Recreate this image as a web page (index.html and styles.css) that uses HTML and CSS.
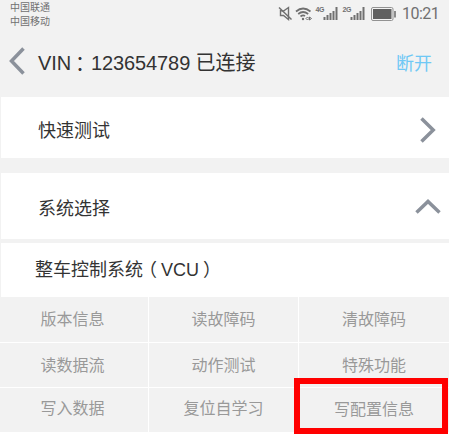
FILE: index.html
```html
<!DOCTYPE html>
<html lang="zh-CN">
<head>
<meta charset="utf-8">
<title>VCU</title>
<link rel="stylesheet" href="styles.css">
</head>
<body>
<div class="status">
  <div class="carriers"><div>中国联通</div><div>中国移动</div></div>
  <svg class="icons" width="124" height="20" viewBox="0 0 124 20" fill="none" stroke="#707070">
    <path d="M2.500 7.500v5h3l5 4v-12l-5 3.500z" stroke-width="1.400"/>
    <path d="M1 4.500l12.500 12" stroke-width="1.500"/>
    <path d="M18 8.500q7-6 14.500 0M20.200 11q4.800-4 10 0M22.500 13.500q2.500-2 4.500-.5" stroke-width="1.700"/>
    <circle cx="25" cy="16" r="1.200" fill="#707070" stroke="none"/>
    <path d="M28 15.500l1.500-1.500 1.500 1.500-1.500 1.500zM31.500 14v3l2-1.500z" stroke-width="1"/>
    <path d="M46.500 17v-3M49.500 17v-5M52.500 17v-7M55.500 17v-9M58.500 17v-13M73.500 17v-3M76.500 17v-5M79.500 17v-7M82.500 17v-9M85.500 17v-13" stroke-width="2"/>
    <rect x="93.500" y="4.500" width="21.500" height="13" rx="1.500" stroke="#929292"/>
    <path fill="#606060" stroke="none" d="M95 6h18.500v10H95z"/>
    <path d="M117 8v6.500" stroke-width="1.600"/>
    <g class="network"><text x="37.500" y="9">4G</text><text x="64.500" y="9">2G</text></g>
  </svg>
  <div class="clock">10:21</div>
</div>
<header class="title-bar">
  <svg class="back" width="16" height="28" viewBox="0 0 16 28"><path d="M14.500 1.500L2.500 14l12 12.500"/></svg>
  <h1>VIN<span class="wide colon" lang="zh-TW">：</span>123654789 已连接</h1>
  <a class="disconnect">断开</a>
</header>
<section class="row quick"><span>快速测试</span>
  <svg class="right" width="16" height="26" viewBox="0 0 16 26"><path d="M1.500 1.500L13.200 13 1.500 24.500"/></svg>
</section>
<section class="row select"><span>系统选择</span>
  <svg class="up" width="26" height="15" viewBox="0 0 26 15"><path d="M1.500 13.500L13 2.500l11.500 11"/></svg>
</section>
<section class="row system"><span>整车控制系统<span class="wide open">（</span>VCU<span class="wide close">）</span></span></section>
<main class="grid">
  <div>版本信息</div><div>读故障码</div><div>清故障码</div>
  <div class="middle">读数据流</div><div class="middle">动作测试</div><div class="middle">特殊功能</div>
  <div class="last">写入数据</div><div class="last">复位自学习</div><div class="last marked">写配置信息</div>
</main>
</body>
</html>
```
FILE: styles.css
```css
*, *::after { box-sizing: border-box; }
body {
  margin: 0;
  width: 449px;
  height: 440px;
  overflow: hidden;
  background: #fff;
  color: #333;
  font-family: "Liberation Sans", "Noto Sans CJK SC", sans-serif;
}
.status {
  display: flex;
  height: 30px;
  background: #f2f2f2;
  color: #707070;
}
.carriers {
  flex: 1;
  padding: 1px 0 0 10px;
  font-size: 10px;
  line-height: 14px;
}
.icons { margin: 3px 0 0; flex: none; }
.network text {
  font: bold 7px "Liberation Sans", sans-serif;
  letter-spacing: -.5px;
  fill: #707070;
  stroke: none;
}
.clock {
  width: 47px;
  font: 16px/28px Roboto, sans-serif;
  letter-spacing: -.5px;
}
.title-bar {
  display: flex;
  align-items: center;
  height: 67px;
  padding: 0 17px 0 9px;
  background: #f2f2f2;
}
.back, .right, .up { fill: none; stroke: #8b919b; stroke-width: 3.5; flex: none; }
.back { margin-top: -5px; }
h1 {
  flex: 1;
  margin: 0 0 0 13px;
  padding-bottom: 2px;
  font-size: 20px;
  line-height: 28px;
  font-weight: 400;
  letter-spacing: -.1px;
  white-space: nowrap;
}
.wide { font-family: "Noto Sans CJK TC", sans-serif; display: inline-block; }
.colon { transform: translate(-1px, 2px); }
.open, .close { font-feature-settings: "halt"; }
.open { margin: 0 4px 0 5px; }
.close { margin: 0 5px 0 4px; }
.disconnect { color: #6fc8f5; font-size: 18px; line-height: 26px; }
.row {
  display: flex;
  align-items: center;
  justify-content: space-between;
  padding-left: 37px;
  border-left: 1px solid #f2f2f2;
  font-size: 18px;
  line-height: 26px;
}
.quick { height: 61px; padding-right: 13px; padding-top: 5px; }
.quick span { padding-top: 1px; }
.select {
  height: 85px;
  padding-right: 8px;
  padding-top: 4px;
  border-top: 15px solid #f2f2f2;
  border-bottom: 4px solid #f2f2f2;
}
.select span { padding-top: 2px; }
.up { margin-top: -3px; }
.system { height: 54px; padding-left: 34px; padding-bottom: 2px; }
.grid {
  display: grid;
  grid-template-columns: 149px 150px 150px;
  grid-template-rows: 46px 45px 44px;
  background: #f2f2f2;
  color: #999;
  font-size: 16px;
}
.grid > div {
  display: flex;
  align-items: center;
  justify-content: center;
  padding-bottom: 3px;
  border-right: 1px solid #fff;
  border-bottom: 1px solid #fff;
}
.grid > .middle { padding-bottom: 2px; }
.grid > div:nth-child(3n) { border-right: 0; }
.grid > div:nth-child(3n+1) { padding-right: 3px; }
.grid > .last { border-bottom: 0; padding-bottom: 6px; }
.grid > .marked {
  position: relative;
  padding-bottom: 4px;
}
.marked::after {
  content: "";
  position: absolute;
  left: -5px;
  top: -10px;
  width: 154px;
  height: 56px;
  border: 6px solid #f00;
}
```
